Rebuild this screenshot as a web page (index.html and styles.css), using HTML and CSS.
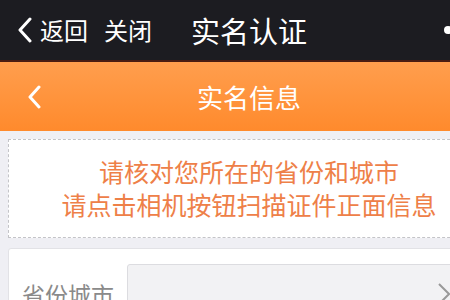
FILE: index.html
```html
<!DOCTYPE html>
<html lang="zh-CN">
<head>
    <meta charset="UTF-8">
    <title>实名认证</title>
    <link rel="stylesheet" href="styles.css">
</head>
<body>
    <div class="page">
        <div class="topbar">
            <div class="top-left">
                <svg class="back-icon" width="16" height="26" viewBox="0 0 16 26">
                    <path d="M13 2 L3 13 L13 24" fill="none" stroke="#fff" stroke-width="3" stroke-linecap="round" stroke-linejoin="round"/>
                </svg>
                <span class="top-link">返回</span>
                <span class="top-link close">关闭</span>
            </div>
            <div class="top-title">实名认证</div>
            <div class="top-right">
                <svg width="40" height="10" viewBox="0 0 40 10">
                    <circle cx="5" cy="5" r="4" fill="#fff"/>
                    <circle cx="19" cy="5" r="4" fill="#fff"/>
                    <circle cx="33" cy="5" r="4" fill="#fff"/>
                </svg>
            </div>
        </div>

        <div class="header">
            <svg class="header-back" width="16" height="24" viewBox="0 0 16 24">
                <path d="M12 2 L3 12 L12 22" fill="none" stroke="#fff" stroke-width="3" stroke-linecap="round" stroke-linejoin="round"/>
            </svg>
            <h2>实名信息</h2>
        </div>

        <div class="content">
            <div class="tip">
                <p>请核对您所在的省份和城市</p>
                <p>请点击相机按钮扫描证件正面信息</p>
            </div>

            <div class="card">
                <div class="row">
                    <label>省份城市</label>
                    <div class="select">
                        <svg class="arrow" width="14" height="24" viewBox="0 0 14 24">
                            <path d="M2 2 L12 12 L2 22" fill="none" stroke="#999" stroke-width="2"/>
                        </svg>
                    </div>
                </div>
            </div>
        </div>
    </div>
</body>
</html>
```

FILE: styles.css
```css
body {
    margin: 0;
    background-color: #efeff4;
    font-family: "Noto Sans CJK SC", "Noto Sans", sans-serif;
    overflow: hidden;
}

.page {
    width: 498px;
}

/* black app bar */
.topbar {
    height: 60px;
    background-color: #1c1c21;
    border-bottom: 2px solid #4a1c12;
    display: grid;
    grid-template-columns: 1fr auto 1fr;
    align-items: center;
    color: #fff;
}

.top-left {
    display: flex;
    align-items: center;
    padding-left: 17px;
}

.back-icon {
    margin-right: 7px;
}

.top-link {
    font-size: 24px;
    line-height: 30px;
}

.top-link.close {
    margin-left: 16px;
}

.top-title {
    font-size: 29px;
    line-height: 36px;
}

.top-right {
    display: flex;
    justify-content: flex-end;
    padding-right: 15px;
}

/* orange page header */
.header {
    height: 69px;
    background: linear-gradient(#ff9e4e, #ff8a2c);
    display: flex;
    align-items: center;
    justify-content: center;
    position: relative;
}

.header-back {
    position: absolute;
    left: 27px;
    top: 23px;
}

.header h2 {
    margin: 0;
    color: #fff;
    font-size: 26px;
    font-weight: normal;
    line-height: 34px;
}

.content {
    padding: 8px 8px 0;
}

.tip {
    background-color: #fff;
    border: 1px dashed #c4c4c8;
    padding: 15px 0 16px;
    text-align: center;
    color: #ee8048;
    font-size: 25px;
    line-height: 33px;
}

.tip p {
    margin: 0;
}

.card {
    margin-top: 10px;
    background-color: #fff;
    border: 1px solid #e2e2e6;
    border-radius: 3px;
    padding: 15px 0 15px 13px;
}

.row {
    display: flex;
    align-items: flex-start;
}

.row label {
    width: 105px;
    color: #8a8a8a;
    font-size: 23px;
    line-height: 30px;
    padding-top: 15px;
}

.select {
    flex: 1;
    height: 60px;
    background-color: #f2f2f4;
    border: 1px solid #dcdce0;
    border-radius: 3px;
    position: relative;
}

.arrow {
    position: absolute;
    left: 309px;
    top: 17px;
}
```
